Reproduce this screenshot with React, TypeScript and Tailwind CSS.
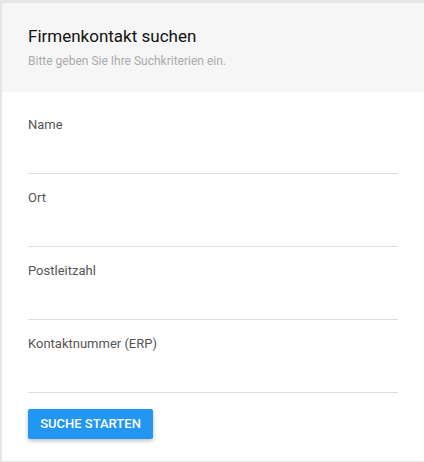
const fields = ['Name', 'Ort', 'Postleitzahl', 'Kontaktnummer (ERP)'];

export default function App() {
  return (
    <div className="w-[424px] h-[462px] bg-[#e6e6e6] pt-[3px] pl-[2px] pb-[1px] overflow-hidden font-['Roboto',sans-serif]">
      <div className="h-full bg-white flex flex-col">
        {/* Header */}
        <div className="bg-[#f6f6f6] h-[89px] px-[26px] pt-[21px] shrink-0">
          <h2 className="text-[17px] leading-6 text-[#111]">Firmenkontakt suchen</h2>
          <p className="mt-[5px] text-[12px] leading-4 text-[#aaaaaa]">Bitte geben Sie Ihre Suchkriterien ein.</p>
        </div>

        {/* Form */}
        <div className="px-[26px] pt-[25px]">
          {fields.map(label => (
            <div key={label} className="mb-[16px]">
              <label className="block text-[13px] leading-4 text-[#555]">{label}</label>
              <input className="block w-full h-[41px] border-b border-[#dddddd] outline-none bg-transparent" />
            </div>
          ))}
          <button className="h-[30px] w-[125px] rounded-[2px] bg-[#2196f3] text-white text-[13px] font-medium uppercase shadow-[0_2px_4px_rgba(0,0,0,0.25)]">
            Suche starten
          </button>
        </div>
      </div>
    </div>
  );
}
